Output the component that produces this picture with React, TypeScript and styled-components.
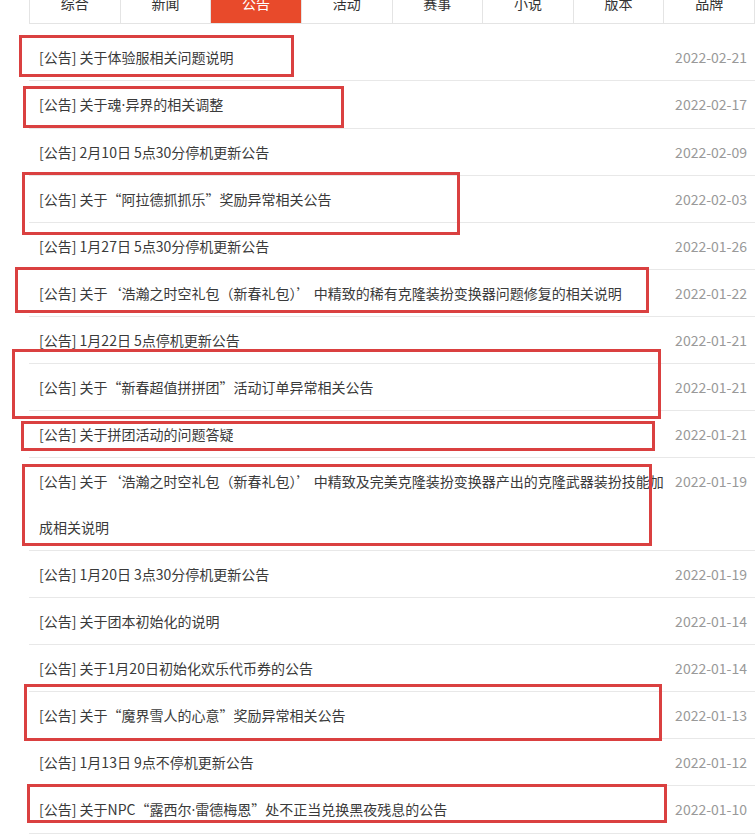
import React from 'react';
import styled, {createGlobalStyle} from 'styled-components';

type Notice = {title: string; date: string};
type Mark = {x: number; y: number; w: number; h: number};

const tabs = ['综合', '新闻', '公告', '活动', '赛事', '小说', '版本', '品牌'];

const notices: Notice[] = [
  {title: '[公告] 关于体验服相关问题说明', date: '2022-02-21'},
  {title: '[公告] 关于魂·异界的相关调整', date: '2022-02-17'},
  {title: '[公告] 2月10日 5点30分停机更新公告', date: '2022-02-09'},
  {title: '[公告] 关于“阿拉德抓抓乐”奖励异常相关公告', date: '2022-02-03'},
  {title: '[公告] 1月27日 5点30分停机更新公告', date: '2022-01-26'},
  {title: '[公告] 关于‘浩瀚之时空礼包（新春礼包）’ 中精致的稀有克隆装扮变换器问题修复的相关说明', date: '2022-01-22'},
  {title: '[公告] 1月22日 5点停机更新公告', date: '2022-01-21'},
  {title: '[公告] 关于“新春超值拼拼团”活动订单异常相关公告', date: '2022-01-21'},
  {title: '[公告] 关于拼团活动的问题答疑', date: '2022-01-21'},
  {
    title: '[公告] 关于‘浩瀚之时空礼包（新春礼包）’ 中精致及完美克隆装扮变换器产出的克隆武器装扮技能加成相关说明',
    date: '2022-01-19',
  },
  {title: '[公告] 1月20日 3点30分停机更新公告', date: '2022-01-19'},
  {title: '[公告] 关于团本初始化的说明', date: '2022-01-14'},
  {title: '[公告] 关于1月20日初始化欢乐代币券的公告', date: '2022-01-14'},
  {title: '[公告] 关于“魔界雪人的心意”奖励异常相关公告', date: '2022-01-13'},
  {title: '[公告] 1月13日 9点不停机更新公告', date: '2022-01-12'},
  {title: '[公告] 关于NPC“露西尔·雷德梅恩”处不正当兑换黑夜残息的公告', date: '2022-01-10'},
];

// red annotation frames drawn over the list
const marks: Mark[] = [
  {x: 19, y: 35, w: 275, h: 42},
  {x: 23, y: 86, w: 321, h: 42},
  {x: 22, y: 172, w: 438, h: 63},
  {x: 15, y: 267, w: 634, h: 46},
  {x: 12, y: 349, w: 649, h: 70},
  {x: 21, y: 421, w: 634, h: 30},
  {x: 22, y: 464, w: 630, h: 82},
  {x: 24, y: 684, w: 638, h: 57},
  {x: 27, y: 784, w: 640, h: 39},
];

const GlobalStyle = createGlobalStyle`
  html, body {
    margin: 0;
    padding: 0;
    background: #fff;
    overflow: hidden;
  }
  body {
    font-family: "Noto Sans CJK SC", "Noto Sans", sans-serif;
  }
`;

// the CJK font draws "·" full width, the original shows a narrow dot
const renderTitle = (title: string) =>
  title.split('·').map((part, i) => (
    <React.Fragment key={i}>
      {i > 0 && <Dot>·</Dot>}
      {part}
    </React.Fragment>
  ));

export default function App() {
  return (
    <>
      <GlobalStyle />
      <Page>
        <Panel>
          <TabBar>
            {tabs.map(t => (
              <Tab key={t} active={t === '公告'}>
                {t}
              </Tab>
            ))}
          </TabBar>
          <List>
            {notices.map((n, i) => (
              <Row key={i}>
                <Title>{renderTitle(n.title)}</Title>
                <DateText>{n.date}</DateText>
              </Row>
            ))}
          </List>
        </Panel>
        {marks.map((m, i) => (
          <Frame key={i} style={{left: m.x, top: m.y, width: m.w, height: m.h}} />
        ))}
      </Page>
    </>
  );
}

const Page = styled.div`
  position: relative;
  width: 755px;
  height: 834px;
  overflow: hidden;
`;

const Panel = styled.div`
  margin: -17px 0 0 29px;
  width: 726px;
`;

const TabBar = styled.div`
  display: grid;
  grid-template-columns: repeat(8, 1fr);
  border-left: 1px solid #e4e4e4;
  border-bottom: 1px solid #e4e4e4;
`;

const Tab = styled.div<{active?: boolean}>`
  height: 40px;
  line-height: 40px;
  text-align: center;
  font-size: 14px;
  color: ${p => (p.active ? '#fff' : '#333')};
  background: ${p => (p.active ? '#e84a2b' : '#fff')};
  border-right: 1px solid #e4e4e4;
`;

const List = styled.ul`
  list-style: none;
  margin: 10px 0 0;
  padding: 0;
`;

const Row = styled.li`
  display: flex;
  justify-content: space-between;
  align-items: flex-start;
  line-height: 46px;
  font-size: 14px;
  border-bottom: 1px solid #e8e8e8;
`;

const Title = styled.span`
  flex: 0 0 640px;
  box-sizing: border-box;
  padding-left: 10px;
  color: #3a3a3a;
`;

const Dot = styled.span`
  font-family: "Noto Sans", "DejaVu Sans", sans-serif;
`;

const DateText = styled.span`
  padding-right: 8px;
  color: #999;
  white-space: nowrap;
`;

const Frame = styled.div`
  position: absolute;
  box-sizing: border-box;
  border: 3px solid #da4040;
  pointer-events: none;
`;
